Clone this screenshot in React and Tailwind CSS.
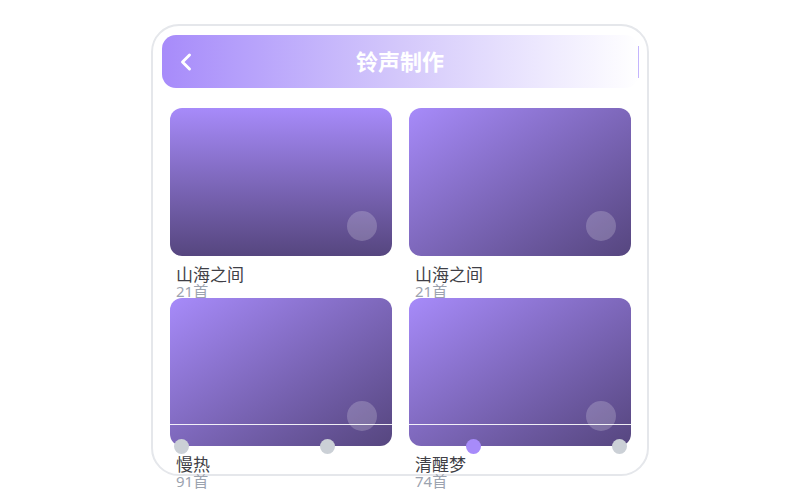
import { ChevronLeft } from 'lucide-react'

const albums = [
    { name: '山海之间', count: '21首', bg: 'bg-gradient-to-b from-[#a78bfa] to-[#56467f]' },
    { name: '山海之间', count: '21首', bg: 'bg-gradient-to-br from-[#a78bfa] to-[#56467f]' },
    { name: '慢热', count: '91首', bg: 'bg-gradient-to-br from-[#a78bfa] to-[#56467f]' },
    { name: '清醒梦', count: '74首', bg: 'bg-gradient-to-br from-[#a78bfa] to-[#56467f]' },
]

const dots = [false, false, true, false]

const AlbumCard = ({ album }) => (
    <div>
        <div className={`relative h-[148px] rounded-xl ${album.bg}`}>
            <div className="absolute right-[15px] bottom-[15px] h-[30px] w-[30px] rounded-full bg-white/20" />
        </div>
        <div className="mt-[10px] pl-[6px]">
            <div className="text-[17px] leading-[18px] text-[#3f3f46]">{album.name}</div>
            <div className="text-[15px] leading-[14px] text-[#9ca3af]">{album.count}</div>
        </div>
    </div>
)

export default function App() {
    return (
        <div className="h-[500px] w-[800px] bg-white pt-6" style={{ fontFamily: '"Noto Sans", "Noto Sans CJK SC", sans-serif' }}>
            <div className="relative mx-auto h-[452px] w-[498px] rounded-[28px] border-2 border-[#e5e7eb] pl-[9px] pr-[8px] pt-[9px]">
                <div className="flex h-[53px] items-center rounded-[14px] bg-gradient-to-r from-[#a78bfa] via-[#d4c8fb] to-white">
                    <ChevronLeft className="ml-[10px] h-7 w-7 text-white" strokeWidth={2.5} />
                    <div className="flex-1 pr-[38px] text-center text-[22px] font-bold text-white">铃声制作</div>
                    <div className="h-8 w-px bg-[#c4b5fd]" />
                </div>

                <div className="mt-5 grid grid-cols-2 gap-x-[17px] px-2">
                    {albums.map((a, i) => (
                        <AlbumCard key={i} album={a} />
                    ))}
                </div>

                <div className="absolute left-[10px] right-[10px] top-[398px] h-px bg-white/90" />
                <div className="absolute left-[21px] top-[413px] flex w-[453px] justify-between">
                    {dots.map((on, i) => (
                        <div key={i} className={`h-[15px] w-[15px] rounded-full ${on ? 'bg-[#a78bfa]' : 'bg-[#cbd0d6]'}`} />
                    ))}
                </div>
            </div>
        </div>
    )
}
